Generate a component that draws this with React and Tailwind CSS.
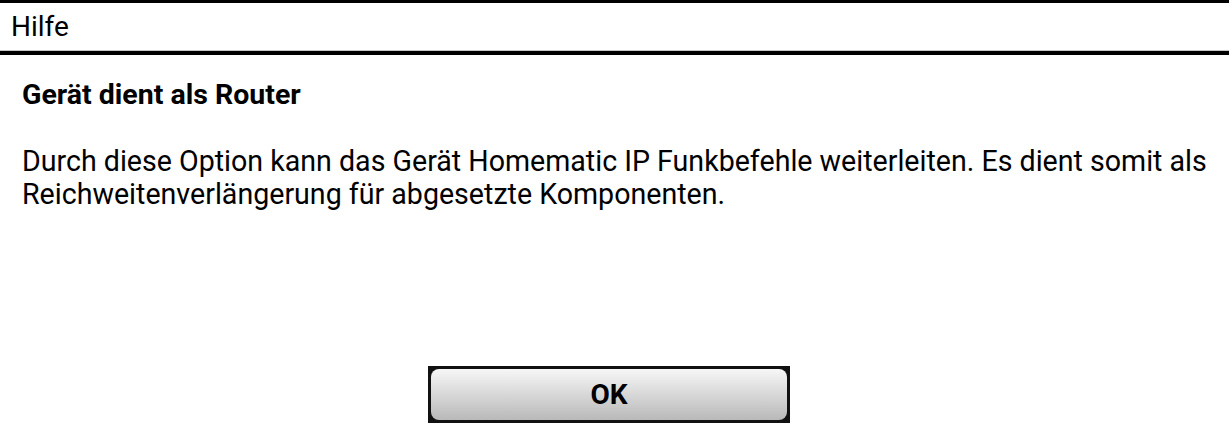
export default function App() {
  return (
    <div className="flex h-[446px] w-[1229px] flex-col bg-white text-black font-['Roboto',sans-serif]">
      {/* title bar */}
      <div className="flex h-[51px] items-center border-t-[3px] border-b border-t-black border-b-[#c8c8c8] px-[11px] text-[28px]">
        Hilfe
      </div>
      <div className="h-[4px] bg-black" />

      <div className="flex flex-1 flex-col px-[22px] pt-[23px]">
        <h2 className="text-[28.5px] font-bold leading-[34px]">Gerät dient als Router</h2>
        <p className="mt-[33px] text-[28.6px] leading-[33px]">
          Durch diese Option kann das Gerät Homematic IP Funkbefehle weiterleiten. Es dient somit als
          Reichweitenverlängerung für abgesetzte Komponenten.
        </p>
      </div>

      <div className="flex justify-center pb-[23px] pr-[11px]">
        <button className="h-[57px] w-[362px] bg-[#111] p-[3px]">
          <span className="flex h-full w-full items-center justify-center rounded-[8px] bg-gradient-to-b from-[#f7f7f7] to-[#b9b9b9] text-[28px] font-bold">
            OK
          </span>
        </button>
      </div>
    </div>
  );
}
